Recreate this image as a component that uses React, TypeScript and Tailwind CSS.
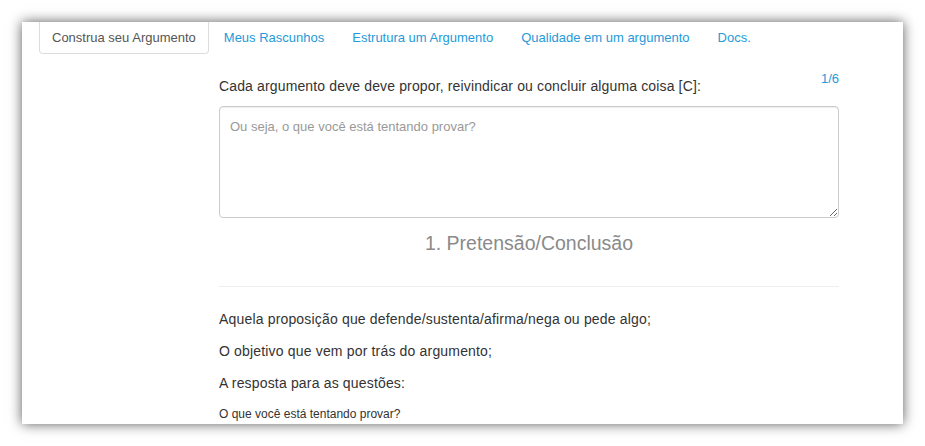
import React from "react";

const tabs = [
  "Meus Rascunhos",
  "Estrutura um Argumento",
  "Qualidade em um argumento",
  "Docs.",
];

export default function App() {
  return (
    <div
      className="w-[925px] h-[446px] bg-white overflow-hidden pt-[22px] pl-[22px]"
      style={{ fontFamily: '"Liberation Sans", Arial, sans-serif' }}
    >
      <div className="w-[881px] h-[402px] bg-white overflow-hidden shadow-[0_0_12px_rgba(0,0,0,0.65)] flex flex-col">
        <ul className="flex pl-[17px] h-[32px] shrink-0">
          <li className="mr-[2px]">
            <span className="block px-[12px] pt-[6px] pb-[5px] leading-[20px] text-[13px] text-[#555] border border-t-0 border-[#ddd] rounded-b-[4px]">
              Construa seu Argumento
            </span>
          </li>
          {tabs.map((t) => (
            <li key={t} className="mr-[2px]">
              <span className="block px-[13px] pt-[6px] pb-[6px] leading-[20px] text-[13px] text-[#259ad9]">
                {t}
              </span>
            </li>
          ))}
        </ul>
        <div className="ml-[197px] w-[620px] flex flex-col">
          <div className="mt-[15px] flex justify-between items-start">
            <span className="pt-[7px] leading-[20px] text-[14px] tracking-[0.14px] text-[#333]">
              Cada argumento deve deve propor, reivindicar ou concluir alguma coisa [C]:
            </span>
            <span className="leading-[20px] text-[13px] text-[#259ad9]">1/6</span>
          </div>
          <textarea
            className="mt-[10px] h-[112px] w-[620px] border border-[#ccc] rounded-[4px] px-[10px] py-[10px] leading-[20px] text-[13px] text-[#555] placeholder:text-[#999] outline-none resize-y shadow-[inset_0_1px_1px_rgba(0,0,0,0.075)]"
            placeholder="Ou seja, o que você está tentando provar?"
            style={{ fontFamily: '"Liberation Sans", Arial, sans-serif' }}
          />
          <div className="mt-[11px] text-center text-[19.5px] leading-[28px] text-[#8a8a8a]">
            1. Pretensão/Conclusão
          </div>
          <div className="mt-[29px] border-t border-[#eee]" />
          <p className="mt-[22px] leading-[20px] text-[14px] tracking-[0.17px] text-[#333]">
            Aquela proposição que defende/sustenta/afirma/nega ou pede algo;
          </p>
          <p className="mt-[12px] leading-[20px] text-[14px] tracking-[0.17px] text-[#333]">
            O objetivo que vem por trás do argumento;
          </p>
          <p className="mt-[12px] leading-[20px] text-[14px] tracking-[0.17px] text-[#333]">
            A resposta para as questões:
          </p>
          <p className="mt-[11px] leading-[20px] text-[12px] text-[#333]">
            O que você está tentando provar?
          </p>
        </div>
      </div>
    </div>
  );
}
